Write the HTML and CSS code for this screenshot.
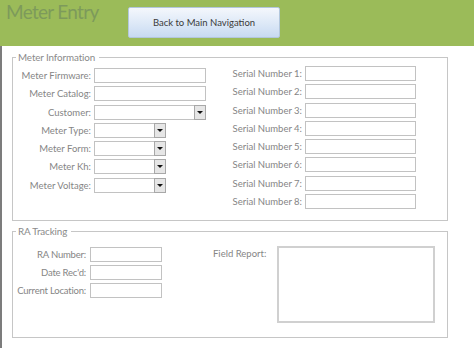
FILE: index.html
```html
<!DOCTYPE html>
<html lang="en">
<head>
  <meta charset="UTF-8">
  <title>Meter Entry</title>
  <link rel="stylesheet" href="styles.css">
</head>
<body>
  <div class="header">
    <h1>Meter Entry</h1>
    <button class="nav-btn">Back to Main Navigation</button>
  </div>

  <div class="form-area">
    <fieldset class="group meter-info">
      <legend>Meter Information</legend>
      <div class="cols">
        <div class="fields left-fields">
          <label>Meter Firmware:</label><input type="text">
          <label>Meter Catalog:</label><input type="text">
          <label>Customer:</label><div class="combo"><input type="text"><span class="drop"></span></div>
          <label>Meter Type:</label><div class="combo short"><input type="text"><span class="drop"></span></div>
          <label>Meter Form:</label><div class="combo short"><input type="text"><span class="drop"></span></div>
          <label>Meter Kh:</label><div class="combo short"><input type="text"><span class="drop"></span></div>
          <label>Meter Voltage:</label><div class="combo short"><input type="text"><span class="drop"></span></div>
        </div>
        <div class="fields serial-fields">
          <label>Serial Number 1:</label><input type="text">
          <label>Serial Number 2:</label><input type="text">
          <label>Serial Number 3:</label><input type="text">
          <label>Serial Number 4:</label><input type="text">
          <label>Serial Number 5:</label><input type="text">
          <label>Serial Number 6:</label><input type="text">
          <label>Serial Number 7:</label><input type="text">
          <label>Serial Number 8:</label><input type="text">
        </div>
      </div>
    </fieldset>

    <fieldset class="group ra-tracking">
      <legend>RA Tracking</legend>
      <div class="cols">
        <div class="fields ra-fields">
          <label>RA Number:</label><input type="text">
          <label>Date Rec'd:</label><input type="text">
          <label>Current Location:</label><input type="text">
        </div>
        <div class="report">
          <label>Field Report:</label>
          <textarea></textarea>
        </div>
      </div>
    </fieldset>
  </div>
</body>
</html>
```

FILE: styles.css
```css
body {
  margin: 0;
  font-family: Lato, "Open Sans", sans-serif;
  background: #ffffff;
  color: #858585;
  width: 474px;
  height: 350px;
  overflow: hidden;
}
.header {
  height: 46px;
  background-color: #9bbb59;
  display: flex;
  align-items: flex-start;
  box-sizing: border-box;
}
.header h1 {
  margin: 0;
  padding: 0 0 0 6px;
  width: 122px;
  font-size: 19px;
  font-weight: normal;
  color: #7d9a5b;
  letter-spacing: -0.7px;
}
.nav-btn {
  margin-top: 7px;
  width: 152px;
  height: 31px;
  border: 1px solid #b3c7dd;
  border-radius: 2px;
  background: linear-gradient(#f4f7fc, #dce8f7 55%, #c8daf2);
  color: #3a3a3a;
  font-family: Lato, "Open Sans", sans-serif;
  font-size: 9.5px;
  padding: 0;
}
.form-area {
  height: 302px;
  border-left: 2px solid #7c7c7c;
  padding: 5px 0 0 10px;
  box-sizing: border-box;
}
.group {
  width: 436px;
  margin: 0;
  padding: 0;
  border: 1px solid #c6c6c6;
  box-sizing: border-box;
  font-size: 9.5px;
}
.group legend {
  padding: 0 4px 0 2px;
  margin-left: 3px;
  color: #8a8a8a;
  font-size: 9.8px;
  letter-spacing: -0.1px;
}
.meter-info {
  height: 170px;
}
.ra-tracking {
  margin-top: 4px;
  height: 113px;
}
.cols {
  display: flex;
  align-items: flex-start;
}
.fields {
  display: grid;
  grid-auto-rows: 18.3px;
  align-items: start;
  column-gap: 3px;
}
.fields label {
  text-align: right;
  line-height: 15px;
  white-space: nowrap;
}
input, textarea {
  box-sizing: border-box;
  height: 15px;
  border: 1px solid #c2c2c2;
  background: #ffffff;
  margin: 0;
  padding: 0;
}
.left-fields {
  grid-template-columns: 78px 112px;
  margin-top: 5px;
}
.left-fields input {
  width: 112px;
}
.combo {
  display: flex;
  width: 112px;
}
.combo.short {
  width: 72px;
}
.combo input {
  flex: 1;
  width: 0;
  border-right: none;
}
.drop {
  width: 12px;
  height: 15px;
  box-sizing: border-box;
  border: 1px solid #a8a8a8;
  background: #e6e6e6;
  display: flex;
  align-items: center;
  justify-content: center;
}
.drop::after {
  content: "";
  border-left: 3px solid transparent;
  border-right: 3px solid transparent;
  border-top: 3px solid #111111;
}
.serial-fields {
  grid-template-columns: 78px 111px;
  margin-left: 18px;
  margin-top: 3px;
}
.serial-fields input {
  width: 111px;
}
.ra-fields {
  grid-template-columns: 73px 72px;
  column-gap: 4px;
  grid-auto-rows: 18px;
  margin-top: 10px;
}
.ra-fields label {
  letter-spacing: -0.2px;
}
.ra-fields input {
  width: 72px;
}
.report {
  display: flex;
  align-items: flex-start;
  margin-left: 51px;
  margin-top: 9px;
}
.report label {
  width: 64px;
  line-height: 15px;
}
.report textarea {
  width: 158px;
  height: 77px;
  border: 2px solid #d0d0d0;
  resize: none;
}
```
